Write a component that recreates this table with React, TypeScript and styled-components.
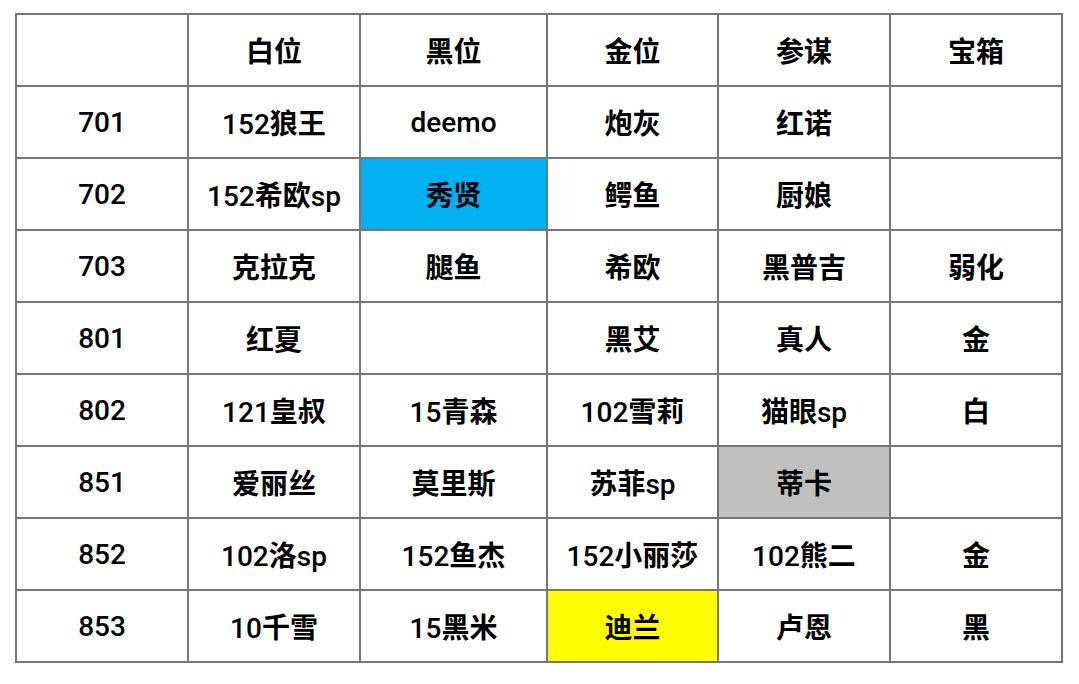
import React from "react";
import styled, { createGlobalStyle } from "styled-components";

const Global = createGlobalStyle`
  html, body { margin: 0; padding: 0; background: #ffffff; }
  body { font-family: Roboto, "Noto Sans CJK SC", sans-serif; }
`;

const Page = styled.div`
  padding: 13px 15px 0 15px;
`;

const Table = styled.table`
  border-collapse: collapse;
  table-layout: fixed;
  width: 1046px;
`;

const Cell = styled.td<{ $bg?: string }>`
  border: 2px solid #767676;
  height: 70px;
  padding: 0;
  text-align: center;
  vertical-align: middle;
  font-size: 28px;
  font-weight: 500;
  color: #000;
  background: ${(p) => p.$bg ?? "#ffffff"};
`;

const Han = styled.span`
  font-family: "Noto Sans CJK SC", sans-serif;
  font-weight: 700;
`;

const widths = [172, 172, 187, 171, 172, 172];

const colors: Record<string, string> = {
  blue: "#00b0f0",
  gray: "#c0c0c0",
  yellow: "#ffff00",
};

type C = string | { t: string; c: string };

const rows: C[][] = [
  ["", "白位", "黑位", "金位", "参谋", "宝箱"],
  ["701", "152狼王", "deemo", "炮灰", "红诺", ""],
  ["702", "152希欧sp", { t: "秀贤", c: "blue" }, "鳄鱼", "厨娘", ""],
  ["703", "克拉克", "腿鱼", "希欧", "黑普吉", "弱化"],
  ["801", "红夏", "", "黑艾", "真人", "金"],
  ["802", "121皇叔", "15青森", "102雪莉", "猫眼sp", "白"],
  ["851", "爱丽丝", "莫里斯", "苏菲sp", { t: "蒂卡", c: "gray" }, ""],
  ["852", "102洛sp", "152鱼杰", "152小丽莎", "102熊二", "金"],
  ["853", "10千雪", "15黑米", { t: "迪兰", c: "yellow" }, "卢恩", "黑"],
];

function Text({ s }: { s: string }) {
  const parts = s.match(/[\u4e00-\u9fff]+|[^\u4e00-\u9fff]+/g) ?? [];
  return (
    <>
      {parts.map((p, i) =>
        /[\u4e00-\u9fff]/.test(p) ? <Han key={i}>{p}</Han> : <span key={i}>{p}</span>
      )}
    </>
  );
}

export default function App() {
  return (
    <>
      <Global />
      <Page>
        <Table>
          <colgroup>
            {widths.map((w, i) => (
              <col key={i} style={{ width: w }} />
            ))}
          </colgroup>
          <tbody>
            {rows.map((r, i) => (
              <tr key={i}>
                {r.map((c, j) =>
                  typeof c === "string" ? (
                    <Cell key={j}>
                      <Text s={c} />
                    </Cell>
                  ) : (
                    <Cell key={j} $bg={colors[c.c]}>
                      <Text s={c.t} />
                    </Cell>
                  )
                )}
              </tr>
            ))}
          </tbody>
        </Table>
      </Page>
    </>
  );
}
